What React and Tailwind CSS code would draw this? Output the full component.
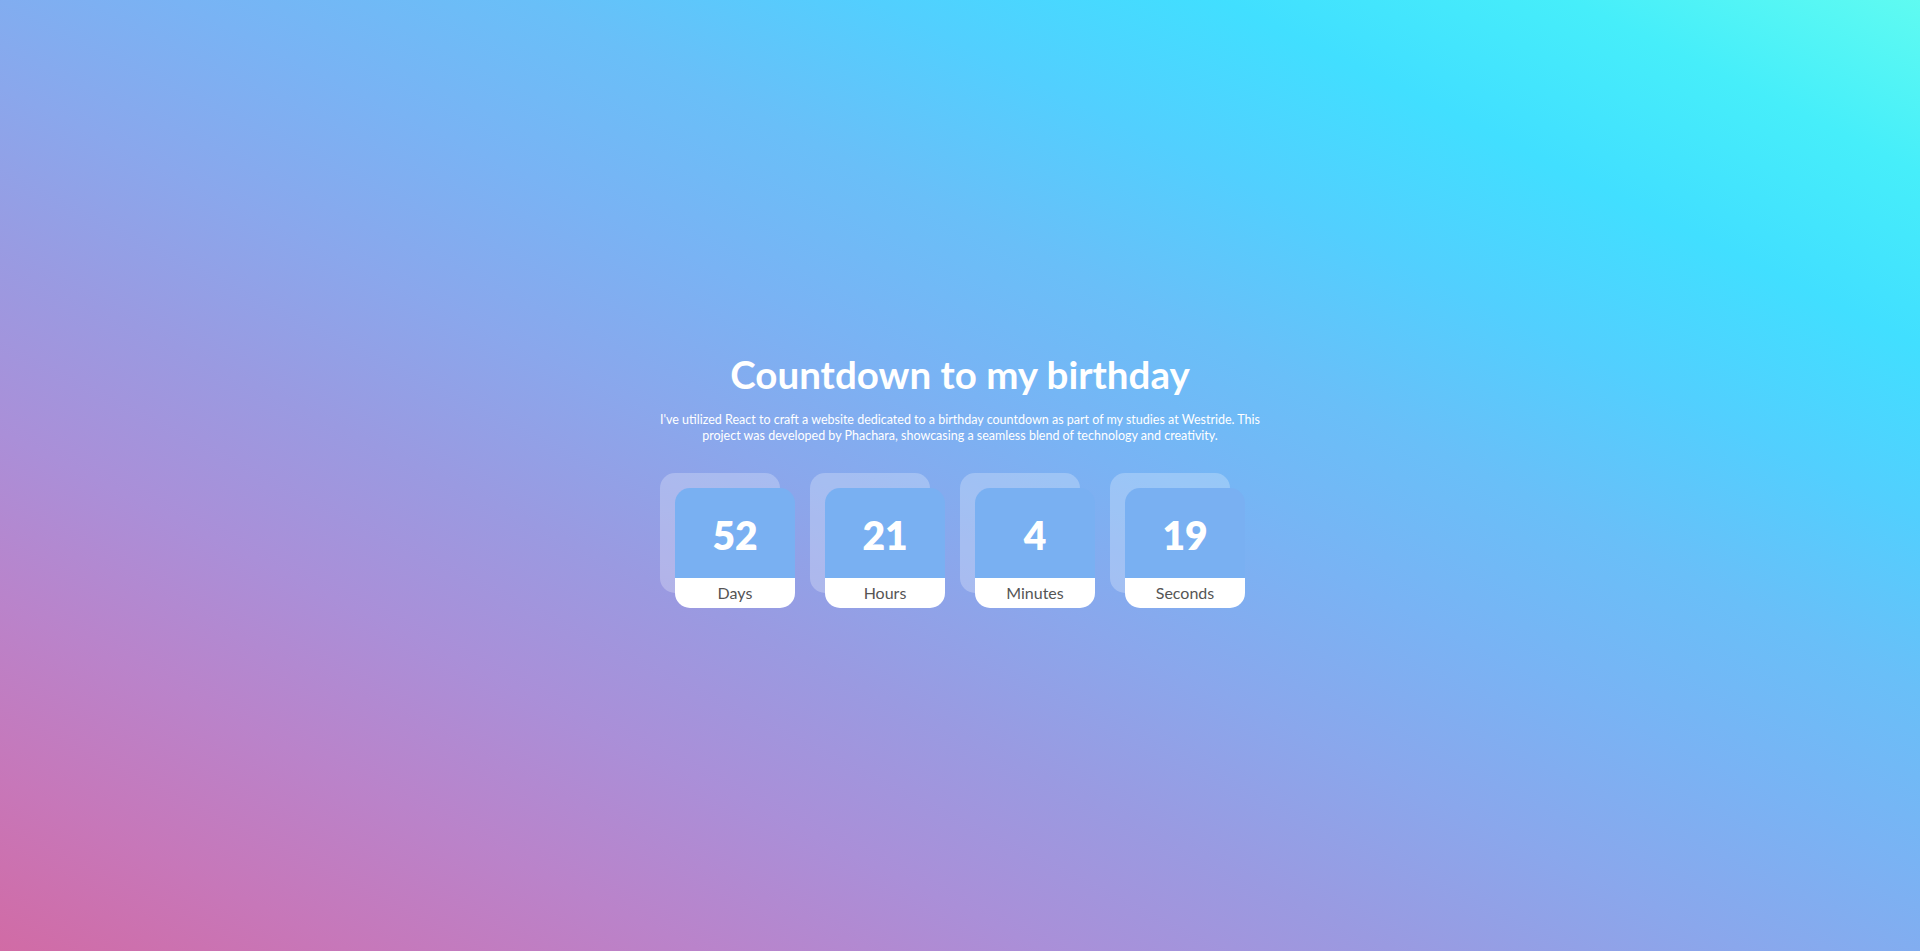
const units = [
  { value: 52, label: "Days" },
  { value: 21, label: "Hours" },
  { value: 4, label: "Minutes" },
  { value: 19, label: "Seconds" },
];

function TimeCard({ value, label }) {
  return (
    <div className="relative w-[120px] h-[120px]">
      <div className="absolute -left-[15px] -top-[15px] w-[120px] h-[120px] rounded-[15px] bg-white/25" />
      <div className="relative w-full h-full rounded-[15px] overflow-hidden flex flex-col">
        <div className="h-[90px] pt-[5px] bg-[#79b0f2] flex items-center justify-center text-white text-[39px] font-extrabold">
          {value}
        </div>
        <div className="h-[30px] bg-white flex items-center justify-center text-[16px] text-[#555]">
          {label}
        </div>
      </div>
    </div>
  );
}

export default function App() {
  return (
    <div className="min-h-screen w-full flex flex-col items-center justify-center pt-[6px] bg-[linear-gradient(to_top_right,#d16ba5,#c777b9,#ba83ca,#aa8fd8,#9a9ae1,#8aa7ec,#79b3f4,#69bff8,#52cffe,#41dfff,#46eefa,#5ffbf1)] font-['Lato',sans-serif]">
      <h1 className="text-white text-[38.5px] font-bold leading-[48px]">Countdown to my birthday</h1>
      <p className="mt-[14px] max-w-[600px] text-center text-white text-[12.5px] leading-[16px]">
        I've utilized React to craft a website dedicated to a birthday countdown as part of my studies at Westride. This
        project was developed by Phachara, showcasing a seamless blend of technology and creativity.
      </p>
      <div className="mt-[44px] flex gap-[30px]">
        {units.map((u) => (
          <TimeCard key={u.label} value={u.value} label={u.label} />
        ))}
      </div>
    </div>
  );
}
